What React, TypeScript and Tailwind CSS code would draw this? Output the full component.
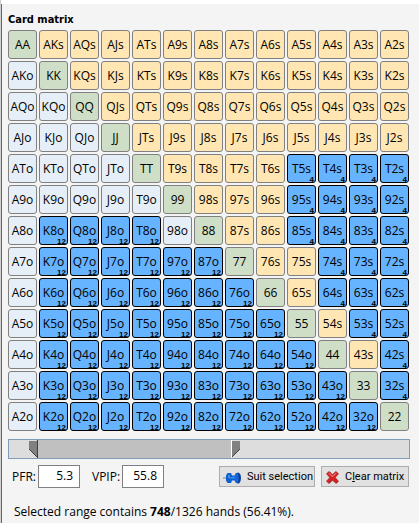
import { useState } from "react";

const RANKS = ["A", "K", "Q", "J", "T", "9", "8", "7", "6", "5", "4", "3", "2"];

const SUITED = [
  "T5s", "T4s", "T3s", "T2s",
  "95s", "94s", "93s", "92s",
  "85s", "84s", "83s", "82s",
  "74s", "73s", "72s",
  "64s", "63s", "62s",
  "53s", "52s",
  "42s",
  "32s",
];

const OFFSUIT = [
  "K8o", "Q8o", "J8o", "T8o",
  "K7o", "Q7o", "J7o", "T7o", "97o", "87o",
  "K6o", "Q6o", "J6o", "T6o", "96o", "86o", "76o",
  "K5o", "Q5o", "J5o", "T5o", "95o", "85o", "75o", "65o",
  "K4o", "Q4o", "J4o", "T4o", "94o", "84o", "74o", "64o", "54o",
  "K3o", "Q3o", "J3o", "T3o", "93o", "83o", "73o", "63o", "53o", "43o",
  "K2o", "Q2o", "J2o", "T2o", "92o", "82o", "72o", "62o", "52o", "42o", "32o",
];

const CELL_COLORS = {
  pair: "border-[#808080] bg-[#cfdec6]",
  suited: "border-[#808080] bg-[#ffe6b3]",
  offsuit: "border-[#808080] bg-[#e6eff7]",
};

type Kind = keyof typeof CELL_COLORS;

function getHand(row: number, col: number): { name: string; kind: Kind } {
  if (row === col) return { name: RANKS[row] + RANKS[row], kind: "pair" };
  if (col > row) return { name: RANKS[row] + RANKS[col] + "s", kind: "suited" };
  return { name: RANKS[col] + RANKS[row] + "o", kind: "offsuit" };
}

const COMBOS: Record<Kind, number> = { pair: 6, suited: 4, offsuit: 12 };

function HandCell({
  name,
  kind,
  selected,
  onToggle,
}: {
  name: string;
  kind: Kind;
  selected: boolean;
  onToggle: () => void;
}) {
  return (
    <button
      type="button"
      aria-pressed={selected}
      onClick={onToggle}
      className={`relative flex h-[29px] items-center justify-center rounded-[3px] border text-xs leading-3 text-black ${
        selected ? "border-black bg-[#66b3ff]" : CELL_COLORS[kind]
      }`}
    >
      {name}
      {selected && (
        <span className="absolute right-px -bottom-px font-['Liberation_Sans',sans-serif] text-[8px] leading-[7px] font-bold">
          {COMBOS[kind]}
        </span>
      )}
    </button>
  );
}

function PinIcon() {
  return (
    <svg className="shrink-0" width="18" height="14" viewBox="0 0 18 14" aria-hidden="true">
      <path d="M0 7h4" stroke="#808080" />
      <path d="M3 4.5L4.5 2H8l1 2.5h4v5H9L8 12H4.5L3 9.5z" fill="#0d5fd0" />
      <path d="M5 3.5l2 1v2l5-1v2H7l-2-1z" fill="#3d92f4" />
      <ellipse cx="15" cy="7" rx="3" ry="5.5" fill="#0b3f9c" />
      <ellipse cx="13.5" cy="7" rx="2" ry="5" fill="#1767dc" />
    </svg>
  );
}

function CrossIcon() {
  return (
    <svg className="shrink-0" width="13" height="13" viewBox="0 0 12 12" aria-hidden="true">
      <path
        d="M3 .5L6 3.5 9 .5 11.5 2.5 8.5 6 11.5 9.5 9.5 11.5 6 8.5 3 11.5.5 9.5 3.5 6 .5 2.5z"
        fill="#d32222"
        stroke="#a31919"
        strokeWidth=".7"
      />
      <path d="M2.5 2l3.5 3L9.5 2" fill="none" stroke="#f07070" />
    </svg>
  );
}

export default function App() {
  const [selected, setSelected] = useState<string[]>([...SUITED, ...OFFSUIT]);
  const [pfr, setPfr] = useState("5.3");
  const [vpip, setVpip] = useState("55.8");

  const low = Number(pfr) || 0;
  const high = Number(vpip) || 0;

  function toggle(name: string) {
    setSelected(
      selected.includes(name) ? selected.filter((h) => h !== name) : [...selected, name]
    );
  }

  return (
    <main className="min-h-screen border-l border-[#d0d0d0] bg-white pt-1 font-['Open_Sans','Noto_Sans',sans-serif] text-xs text-black">
      <div className="min-h-[519px] border-l border-[#1979ca] bg-[#f4f4f4] pt-1.5 pr-[9px] pb-1 pl-1.5">
        <h1 className="h-5 font-['DejaVu_Sans_Condensed','DejaVu_Sans',sans-serif] text-[11px] leading-5 font-bold">
          Card matrix
        </h1>

        <div className="mr-px grid grid-cols-13 gap-0.5">
          {RANKS.map((_, row) =>
            RANKS.map((_, col) => {
              const { name, kind } = getHand(row, col);
              return (
                <HandCell
                  key={name}
                  name={name}
                  kind={kind}
                  selected={selected.includes(name)}
                  onToggle={() => toggle(name)}
                />
              );
            })
          )}
        </div>

        <div className="relative mt-2 flex h-5 border border-[#7f9db9] bg-[#dddddd]">
          <div style={{ flex: `${low} 0 0` }} />
          <svg width="9" height="18" viewBox="0 0 9 18" aria-hidden="true">
            <path d="M0 1h8v16L0 9z" fill="#808080" />
            <path d="M0 9l8 8" stroke="#404040" />
            <path d="M8.5 0v18" stroke="#404040" />
          </svg>
          <div className="bg-[#c0c0c0]" style={{ flex: `${high - low} 0 0` }} />
          <svg width="9" height="18" viewBox="0 0 9 18" aria-hidden="true">
            <path d="M.5 0v18" stroke="#ffffff" />
            <path d="M1 1h8v8l-8 8z" fill="#808080" />
            <path d="M9 9l-8 8" stroke="#404040" />
          </svg>
          <div style={{ flex: `${100 - high} 0 0` }} />
          <input
            type="range"
            aria-label="PFR range"
            min="0"
            max="100"
            step="0.1"
            value={low}
            onChange={(e) => setPfr(e.target.value)}
            className="absolute inset-y-0 left-0 w-1/4 opacity-0"
          />
          <input
            type="range"
            aria-label="VPIP range"
            min="0"
            max="100"
            step="0.1"
            value={high}
            onChange={(e) => setVpip(e.target.value)}
            className="absolute inset-y-0 right-0 w-3/4 opacity-0"
          />
        </div>

        <div className="mt-1.5 mr-px flex items-center justify-between">
          <div className="flex items-center pl-1">
            <label htmlFor="pfr" className="w-[26px] whitespace-nowrap">
              PFR:
            </label>
            <input
              id="pfr"
              value={pfr}
              onChange={(e) => setPfr(e.target.value)}
              className="h-[23px] w-[42px] border border-[#808080] bg-white pr-1.5 pb-0.5 text-right"
            />
            <label htmlFor="vpip" className="ml-3 w-[30px] whitespace-nowrap">
              VPIP:
            </label>
            <input
              id="vpip"
              value={vpip}
              onChange={(e) => setVpip(e.target.value)}
              className="h-[23px] w-[42px] border border-[#808080] bg-white pr-1.5 pb-0.5 text-right"
            />
          </div>
          <div className="flex gap-1.5 font-['Roboto',sans-serif] text-[11px]">
            <button
              type="button"
              className="flex h-[21px] w-24 items-center gap-1.5 border border-[#adadad] bg-[#e1e1e1] pt-0.5 pl-[3px] whitespace-nowrap"
            >
              <PinIcon />
              Suit selection
            </button>
            <button
              type="button"
              onClick={() => setSelected([])}
              className="flex h-[21px] w-22 items-center gap-1.5 border border-[#adadad] bg-[#e1e1e1] pt-0.5 pl-1 whitespace-nowrap"
            >
              <CrossIcon />
              <span>
                C<u>l</u>ear matrix
              </span>
            </button>
          </div>
        </div>

        <p className="mt-4 pl-1.5 leading-4">
          Selected range contains <b>748</b>/1326 hands (56.41%).
        </p>
      </div>
    </main>
  );
}
